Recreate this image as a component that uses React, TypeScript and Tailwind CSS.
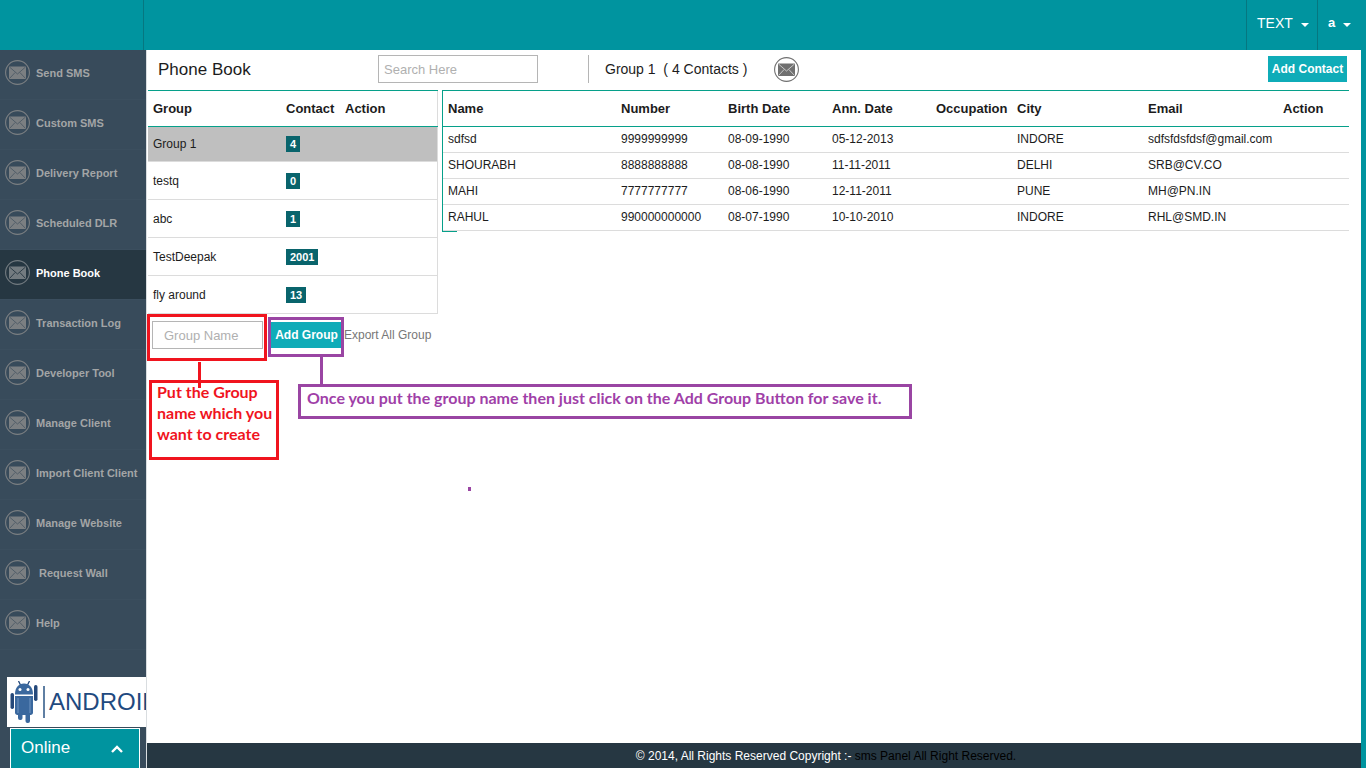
import { useState } from 'react';

type Group = {
  id: number;
  name: string;
  count: number;
};

type Contact = {
  name: string;
  number: string;
  birthDate: string;
  annDate: string;
  occupation: string;
  city: string;
  email: string;
};

const MENU = [
  'Send SMS',
  'Custom SMS',
  'Delivery Report',
  'Scheduled DLR',
  'Phone Book',
  'Transaction Log',
  'Developer Tool',
  'Manage Client',
  'Import Client Client',
  'Manage Website',
  ' Request Wall',
  'Help',
];

const GROUPS: Group[] = [
  { id: 1, name: 'Group 1', count: 4 },
  { id: 2, name: 'testq', count: 0 },
  { id: 3, name: 'abc', count: 1 },
  { id: 4, name: 'TestDeepak', count: 2001 },
  { id: 5, name: 'fly around', count: 13 },
];

const CONTACTS: Contact[] = [
  { name: 'sdfsd', number: '9999999999', birthDate: '08-09-1990', annDate: '05-12-2013', occupation: '', city: 'INDORE', email: 'sdfsfdsfdsf@gmail.com' },
  { name: 'SHOURABH', number: '8888888888', birthDate: '08-08-1990', annDate: '11-11-2011', occupation: '', city: 'DELHI', email: 'SRB@CV.CO' },
  { name: 'MAHI', number: '7777777777', birthDate: '08-06-1990', annDate: '12-11-2011', occupation: '', city: 'PUNE', email: 'MH@PN.IN' },
  { name: 'RAHUL', number: '990000000000', birthDate: '08-07-1990', annDate: '10-10-2010', occupation: '', city: 'INDORE', email: 'RHL@SMD.IN' },
];

function MailIcon({ className }: { className?: string }) {
  return (
    <svg viewBox="0 0 25 25" className={`h-[25px] w-[25px] shrink-0 ${className ?? ''}`} fill="none" aria-hidden="true">
      <circle cx="12.5" cy="12.5" r="11.9" stroke="currentColor" strokeWidth="1.1" />
      <rect x="4" y="6.5" width="17" height="12.5" rx="0.5" fill="currentColor" />
      <path
        d="M4.5 7l8 7 8-7M4.5 18.5l5.6-6M20.5 18.5l-5.6-6"
        stroke="var(--fold)"
        strokeWidth="0.9"
      />
    </svg>
  );
}

function Caret() {
  return (
    <svg viewBox="0 0 8 4" className="mt-1 h-1 w-2" fill="currentColor" aria-hidden="true">
      <path d="M0 0h8L4 4z" />
    </svg>
  );
}

function AndroidBot() {
  return (
    <svg viewBox="0 0 28 42" className="h-[42px] w-7 shrink-0" fill="#3a689e" aria-hidden="true">
      <path d="M8.500 0l2.500 5M19.500 0l-2.500 5" stroke="#24487a" strokeWidth="1.300" />
      <path d="M5 13.500C5 6.500 8.500 2.500 14 2.500s9 4 9 11z" />
      <circle cx="10" cy="8.500" r="1.500" fill="#fff" />
      <circle cx="18" cy="8.500" r="1.500" fill="#fff" />
      <path d="M5 15h18v16.500c0 1.500-1 2.500-2.500 2.500h-13C6 34 5 33 5 31.500z" />
      <path d="M8 17v15M20 17v15" stroke="#6f94c2" strokeWidth="1" />
      <rect x="0.500" y="12" width="3.500" height="16" rx="1.700" fill="#24487a" />
      <rect x="24" y="4" width="3.500" height="16" rx="1.700" fill="#24487a" />
      <rect x="8" y="32" width="4.500" height="7" rx="2" />
      <rect x="15.500" y="32" width="4.500" height="10" rx="2" />
    </svg>
  );
}

export default function App() {
  const [activeGroup, setActiveGroup] = useState(1);
  const [query, setQuery] = useState('');
  const [groupName, setGroupName] = useState('');

  const selected = GROUPS.find(g => g.id === activeGroup) ?? GROUPS[0];
  const contacts = CONTACTS.filter(c => c.name.toLowerCase().includes(query.toLowerCase()));

  return (
    <div className="flex min-h-screen flex-col bg-[#00949f] font-['Liberation_Sans',Arial,sans-serif] text-xs text-[#1c1c1c]">

      {/* Top bar */}
      <header className="flex h-[50px] text-white">
        <div className="w-36 border-r border-[#067780]" />
        <div className="ml-auto flex">
          <button className="flex w-[71px] items-center gap-2 border-l border-[#067780] pb-1 pl-[10px] text-sm">
            TEXT <Caret />
          </button>
          <button className="flex w-[49px] items-center gap-2 border-l border-[#067780] pb-1 pl-[10px] text-[13px] font-bold">
            a <Caret />
          </button>
        </div>
      </header>

      <div className="flex grow pr-[5px]">

        {/* Sidebar */}
        <aside className="flex w-[147px] shrink-0 flex-col border-r border-[#d9dde0] bg-[#384b5b]">
          <nav>
            {MENU.map(item => {
              const active = item === 'Phone Book';
              return (
                <a
                  key={item}
                  href="#"
                  className={`flex h-[50px] items-center gap-[6px] whitespace-pre border-b border-[#3b4e5e] pb-1 pl-[5px] text-[11px] font-bold ${
                    active ? 'bg-[#263742] text-white' : 'text-[#a3a5a6]'
                  }`}
                >
                  <MailIcon className={active ? 'text-[#737b80] [--fold:#263742]' : 'text-[#7b7f82] [--fold:#4d5a65]'} />
                  <span className="pt-px">{item}</span>
                </a>
              );
            })}
          </nav>
          <div className="ml-[7px] mt-[27px] flex h-[50px] items-center overflow-hidden bg-white pl-[3px]">
            <AndroidBot />
            <span className="ml-[5px] h-8 shrink-0 border-l-2 border-[#5f7fa3]" />
            <span className="ml-1 text-2xl text-[#1f4a80]">ANDROID</span>
          </div>
          <button className="ml-[10px] mr-[6px] mt-auto flex h-10 items-center justify-between border border-b-0 border-white bg-[#00949f] pl-[10px] pr-4 text-[17px] text-white">
            Online
            <svg viewBox="0 0 12 8" className="h-2 w-3" fill="none" stroke="currentColor" strokeWidth="2.4" aria-hidden="true">
              <path d="M1 7l5-5 5 5" />
            </svg>
          </button>
        </aside>

        <div className="flex min-w-0 grow flex-col bg-white">
          <main className="relative grow">

            {/* Title row */}
            <div className="flex h-10 items-center pb-[2px] pl-[11px] pr-[14px]">
              <h1 className="w-[220px] pt-[2px] text-[17px]">Phone Book</h1>
              <input
                type="text"
                aria-label="Search contacts"
                placeholder="Search Here"
                value={query}
                onChange={e => setQuery(e.target.value)}
                className="h-7 w-40 border border-[#b5b5b5] px-[5px] text-[13px] outline-none placeholder:text-[#b0b0b0]"
              />
              <h2 className="ml-[50px] flex h-7 items-center whitespace-pre border-l border-[#b5b5b5] pl-4 text-sm">
                {`${selected.name}  ( ${selected.count} Contacts )`}
              </h2>
              <button aria-label="Send message to group" className="ml-[27px]">
                <MailIcon className="text-[#707070] [--fold:#d0d0d0]" />
              </button>
              <button className="ml-auto h-[26px] w-[79px] whitespace-nowrap bg-[#0facb8] font-bold text-white">Add Contact</button>
            </div>

            <div className="flex items-start gap-1">

              {/* Groups */}
              <section className="w-[291px] shrink-0 pl-px">
                <table className="w-full table-fixed border-r border-[#dcdcdc] text-left">
                  <colgroup>
                    <col className="w-[133px]" />
                    <col className="w-[59px]" />
                    <col />
                  </colgroup>
                  <thead>
                    <tr className="h-9 text-[13px]">
                      <th className="border-y border-[#06a08a] pl-[5px]">Group</th>
                      <th className="border-y border-[#06a08a] pl-[5px]">Contact</th>
                      <th className="border-y border-[#06a08a] pl-[5px]">Action</th>
                    </tr>
                  </thead>
                  <tbody>
                    {GROUPS.map(g => (
                      <tr
                        key={g.id}
                        onClick={() => setActiveGroup(g.id)}
                        className={`cursor-pointer border-b border-[#dcdcdc] ${
                          g.id === activeGroup ? 'h-[35px] bg-[#bfbfbf]' : 'h-[38px]'
                        }`}
                      >
                        <td className="pl-[5px]">{g.name}</td>
                        <td className="pl-[5px]">
                          <span className="inline-block h-4 bg-[#09646c] px-1 text-[11px] font-bold leading-4 text-white">
                            {g.count}
                          </span>
                        </td>
                        <td />
                      </tr>
                    ))}
                  </tbody>
                </table>
                <form className="mt-[7px] flex items-center pl-1" onSubmit={e => e.preventDefault()}>
                  <input
                    type="text"
                    aria-label="Group Name"
                    placeholder="Group Name"
                    value={groupName}
                    onChange={e => setGroupName(e.target.value)}
                    className="h-7 w-[111px] border border-[#b5b5b5] px-[11px] text-[13px] outline-none placeholder:text-[#b0b0b0]"
                  />
                  <button className="ml-2 h-[26px] w-[71px] whitespace-nowrap bg-[#0facb8] font-bold text-white">Add Group</button>
                  <a href="#" className="ml-[2px] whitespace-nowrap text-[#777777]">Export All Group</a>
                </form>
              </section>

              {/* Contacts */}
              <section className="mr-3 min-w-0 grow border-l border-[#06a08a]">
                <table className="w-full table-fixed text-left">
                  <colgroup>
                    <col className="w-[173px]" />
                    <col className="w-[107px]" />
                    <col className="w-[104px]" />
                    <col className="w-[104px]" />
                    <col className="w-[81px]" />
                    <col className="w-[131px]" />
                    <col className="w-[135px]" />
                    <col />
                  </colgroup>
                  <thead>
                    <tr className="h-9 text-[13px]">
                      {['Name', 'Number', 'Birth Date', 'Ann. Date', 'Occupation', 'City', 'Email', 'Action'].map(h => (
                        <th key={h} className="border-y border-[#06a08a] pl-[5px]">{h}</th>
                      ))}
                    </tr>
                  </thead>
                  <tbody>
                    {contacts.map(c => (
                      <tr key={c.number} className="h-[26px] border-b border-[#dcdcdc]">
                        <td className="pb-[2px] pl-[5px]">{c.name}</td>
                        <td className="pb-[2px] pl-[5px]">{c.number}</td>
                        <td className="pb-[2px] pl-[5px]">{c.birthDate}</td>
                        <td className="pb-[2px] pl-[5px]">{c.annDate}</td>
                        <td className="pb-[2px] pl-[5px]">{c.occupation}</td>
                        <td className="pb-[2px] pl-[5px]">{c.city}</td>
                        <td className="pb-[2px] pl-[5px]">{c.email}</td>
                        <td />
                      </tr>
                    ))}
                  </tbody>
                </table>
                <div className="w-[14px] border-t border-[#06a08a]" />
              </section>
            </div>

            {/* Help callouts */}
            <div className="pointer-events-none font-[Lato,sans-serif] text-base font-bold">
              <div className="absolute left-0 top-[264px] h-[47px] w-[120px] border-3 border-[#f0141e]" />
              <div className="absolute left-[51px] top-[312px] h-[26px] w-[3px] bg-[#f0141e]" />
              <p className="absolute left-[2px] top-[330px] h-20 w-[130px] whitespace-nowrap border-3 border-[#f0141e] pl-[5px] leading-[21px] text-[#f0141e]">
                <span className="-mt-[2px] block">Put the Group<br />name which you<br />want to create</span>
              </p>
              <div className="absolute left-[121px] top-[267px] h-10 w-[76px] border-3 border-[#9a45a3]" />
              <div className="absolute left-[173px] top-[306px] h-7 w-[3px] bg-[#9a45a3]" />
              <p className="absolute left-[151px] top-[334px] h-[35px] w-[614px] whitespace-nowrap border-3 border-[#9a45a3] pl-[6px] leading-[21px] text-[#a03fa8]">
                Once you put the group name then just click on the Add Group Button for save it.
              </p>
              <div className="absolute left-[321px] top-[437px] h-1 w-[3px] bg-[#9a45a3]" />
            </div>
          </main>

          <footer className="h-[25px] bg-[#263742] pl-36 text-center leading-[27px] text-black">
            <span className="text-white">© 2014, All Rights Reserved Copyright :-</span> sms Panel All Right Reserved.
          </footer>
        </div>
      </div>
    </div>
  );
}
